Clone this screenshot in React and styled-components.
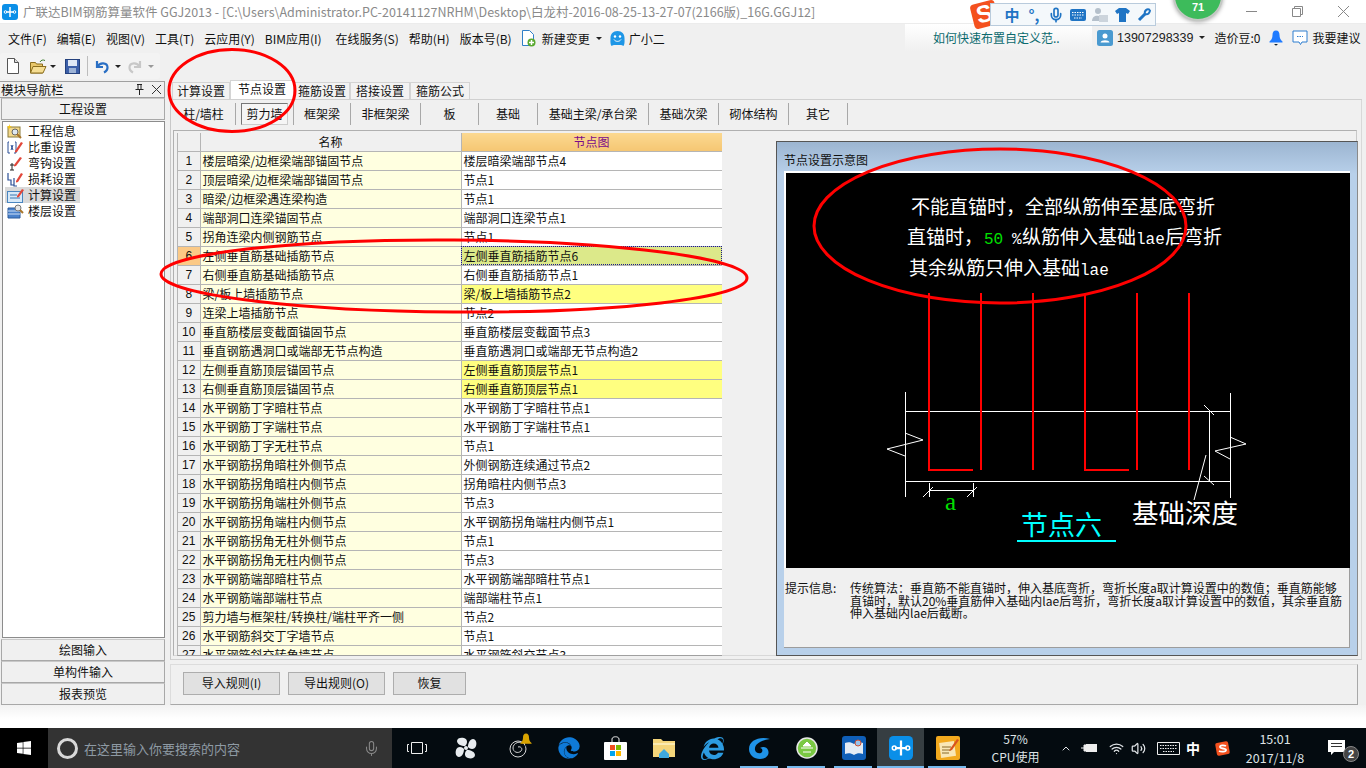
import React from 'react'
import styled, { createGlobalStyle } from 'styled-components'
import { FaWindows, FaEdge, FaInternetExplorer } from 'react-icons/fa'
import { Mic, ChevronUp, Wifi, Volume2 } from 'lucide-react'

const UI = `"Noto Sans CJK SC", "Noto Sans", sans-serif`

const GlobalStyle = createGlobalStyle`
  html, body {
    margin: 0;
    padding: 0;
    width: 1366px;
    height: 768px;
    overflow: hidden;
    background: #f0f0f0;
    font-family: ${UI};
    font-size: 12px;
    color: #111;
  }
  * { box-sizing: border-box; }
`

const Page = styled.div`
  position: relative;
  width: 1366px;
  height: 768px;
  display: flex;
  flex-direction: column;
  overflow: hidden;
`

/* title bar */
const TitleBar = styled.div`
  height: 23px;
  background: #fff;
  display: flex;
  align-items: center;
  padding-left: 2px;
  flex: none;
`
const TitleText = styled.div`
  margin-left: 5px;
  font-size: 12.5px;
  line-height: 23px;
  color: #8a8a8a;
  white-space: nowrap;
`
const WindowButtons = styled.div`
  margin-left: auto;
  display: flex;
`
const WindowButton = styled.div`
  width: 46px;
  height: 23px;
  display: flex;
  align-items: center;
  justify-content: center;
`

/* IME bar over the title bar */
const ImeBar = styled.div`
  position: absolute;
  left: 990px;
  top: 3px;
  width: 166px;
  height: 23px;
  background: #f4f8fb;
  border: 1px solid #b9cbdc;
  display: flex;
  align-items: center;
  padding-left: 10px;
`
const ImeItem = styled.div`
  width: 22px;
  height: 21px;
  display: flex;
  align-items: center;
  justify-content: center;
  color: #1f74c4;
  font-size: 15px;
  font-weight: 700;
`
const ImeLogo = styled.div`
  position: absolute;
  left: 972px;
  top: 2px;
  width: 25px;
  height: 25px;
  background: #f4511e;
  border-radius: 4px;
  transform: rotate(-14deg);
  color: #fff;
  font: 700 24px/24px "Liberation Sans", sans-serif;
  text-align: center;
`
const Ball = styled.div`
  position: absolute;
  left: 1173px;
  top: -29px;
  width: 50px;
  height: 50px;
  border-radius: 50%;
  background: #3dbb5b;
  border: 2px solid #c4c8c4;
  box-shadow: 0 1px 4px rgba(0, 0, 0, 0.35);
  color: #fff;
  font: 700 11px/12px "Liberation Sans", sans-serif;
  display: flex;
  align-items: flex-end;
  justify-content: center;
  padding-bottom: 6px;
`

/* menu */
const MenuBar = styled.div`
  height: 30px;
  display: flex;
  align-items: center;
  padding-left: 8px;
  flex: none;
  border-top: 1px solid #ececec;
`
const MenuItem = styled.div`
  margin-left: ${(p) => p.$left || 0}px;
  margin-right: ${(p) => p.$gap ?? 10}px;
  white-space: nowrap;
  line-height: 16px;
  display: flex;
  align-items: center;
`
const Caret = styled.span`
  display: inline-block;
  border-left: 3px solid transparent;
  border-right: 3px solid transparent;
  border-top: 3px solid ${(p) => p.$color || '#222'};
`
const HelpLink = styled.div`
  position: absolute;
  left: 905px;
  top: 24px;
  width: 187px;
  height: 27px;
  background: linear-gradient(#fff, #f0f0f0);
  color: #0b6a6e;
  line-height: 27px;
  padding-left: 28px;
  white-space: nowrap;
`
const AccountArea = styled.div`
  position: absolute;
  left: 1097px;
  top: 24px;
  height: 27px;
  display: flex;
  align-items: center;
  white-space: nowrap;
`
const Phone = styled.span`
  font-family: "Liberation Sans", sans-serif;
  font-size: 12.5px;
  margin-left: 4px;
  color: #222;
`

/* toolbar */
const Toolbar = styled.div`
  height: 28px;
  flex: none;
  display: flex;
  align-items: flex-start;
`
const ToolGroup = styled.div`
  height: 26px;
  width: 160px;
  background: #f3f3f3;
  border-radius: 3px;
  display: flex;
  align-items: center;
  padding-left: 5px;
`
const ToolCell = styled.div`
  width: ${(p) => p.$w}px;
  display: flex;
  justify-content: center;
  align-items: center;
`
const ToolSep = styled.div`
  width: 1px;
  height: 20px;
  background: #bdbdbd;
  margin: 0 6px 0 7px;
`
const UndoGlyph = styled.svg`
  transform: ${(p) => (p.$flip ? 'scaleX(-1)' : 'none')};
`

/* main */
const Main = styled.div`
  height: 624px;
  flex: none;
  display: flex;
`
const Sidebar = styled.div`
  width: 165px;
  flex: none;
  display: flex;
  flex-direction: column;
  margin-right: 5px;
`
const SideHeader = styled.div`
  height: 17px;
  border: 1px solid #a0a0a0;
  border-left: none;
  display: flex;
  align-items: center;
  font-size: 12.5px;
  line-height: 15px;
  padding-left: 1px;
`
const SideHeaderTools = styled.div`
  margin-left: auto;
  display: flex;
  gap: 8px;
  padding-right: 3px;
  align-items: center;
`
const SideButton = styled.div`
  height: 22px;
  border: 1px solid #a8a8a8;
  border-top-color: #c8c8c8;
  background: #f0f0f0;
  margin-left: 1px;
  text-align: center;
  line-height: 20px;
`
const SideList = styled.div`
  flex: 1;
  margin: 1px 0 1px 2px;
  background: #fff;
  border: 1px solid #8c8c8c;
  padding: 1px 2px;
`
const SideItem = styled.div`
  height: 16px;
  display: flex;
  align-items: center;
  width: 75px;
  padding-left: 2px;
  background: ${(p) => (p.$active ? '#d9d9d9' : 'transparent')};
  line-height: 16px;
  white-space: nowrap;
`
const SideIcon = styled.span`
  width: 18px;
  height: 16px;
  margin-right: 3px;
  flex: none;
  display: flex;
  align-items: center;
`
const Content = styled.div`
  width: 1192px;
  flex: none;
  display: flex;
  flex-direction: column;
`
const TabStrip = styled.div`
  height: 19px;
  flex: none;
  display: flex;
  align-items: flex-end;
  padding-left: 2px;
  border-bottom: 1px solid #d0d0d0;
`
const Tab = styled.div`
  width: ${(p) => p.$w}px;
  height: ${(p) => (p.$active ? 19 : 17)}px;
  background: ${(p) => (p.$active ? '#fff' : '#f2f2f2')};
  border: 1px solid #d4d4d4;
  border-bottom: none;
  text-align: center;
  line-height: 16px;
  position: relative;
`
const Sheet = styled.div`
  height: 560px;
  flex: none;
  border-left: 1px solid #c8c8c8;
  border-right: 1px solid #d8d8d8;
  border-bottom: 1px solid #d0d0d0;
  padding: 3px 4px 3px 1px;
  display: flex;
  flex-direction: column;
`
const SubTabs = styled.div`
  height: 22px;
  display: flex;
  flex: none;
  margin-bottom: 5px;
`
const SubTab = styled.div`
  width: ${(p) => p.$w}px;
  flex: none;
  border-right: 1px solid #a8a8a8;
  display: flex;
  align-items: center;
  justify-content: center;
  padding: 0 5px;
  line-height: 16px;
  white-space: nowrap;
`
const SubTabInner = styled.div`
  flex: 1;
  height: 22px;
  text-align: center;
  line-height: 20px;
  border: 1px solid transparent;
  border-color: ${(p) => (p.$active ? '#777 #ccc #ccc #777' : 'transparent')};
  background: ${(p) => (p.$active ? '#f5f5f5' : 'transparent')};
`
const Workspace = styled.div`
  flex: 1;
  border: 1px solid #b0b0b0;
  border-right-color: #c8c8c8;
  border-bottom-color: #d8d8d8;
  padding: 2px 0 3px 3px;
  display: flex;
  min-height: 0;
  margin-left: 1px;
`
const GridWrap = styled.div`
  width: 545px;
  height: 523px;
  flex: none;
  overflow: hidden;
  border-bottom: 1px solid #a0a0a0;
  border-left: 1px solid #b5b5b5;
`
const Grid = styled.table`
  border-collapse: collapse;
  table-layout: fixed;
  width: 544px;
`
const GridCol = styled.col`
  width: ${(p) => p.$w}px;
`
const HeadCell = styled.th`
  height: 18px;
  padding: 0;
  border: 1px solid #b5b5b5;
  border-top: none;
  border-left: ${(p) => (p.$first ? 'none' : '1px solid #b5b5b5')};
  font-weight: 400;
  line-height: 16px;
  background: ${(p) => (p.$accent ? 'linear-gradient(#fbd890, #f5c673)' : '#f0f0f0')};
  color: ${(p) => (p.$accent ? '#7a0a8a' : '#111')};
`
const NumCell = styled.td`
  height: 19px;
  padding: 0;
  border: 1px solid #b5b5b5;
  border-left: none;
  text-align: center;
  line-height: 16px;
  font-family: "Liberation Sans", sans-serif;
  background: ${(p) => (p.$current ? '#fbc986' : '#f0f0f0')};
`
const NameCell = styled.td`
  height: 19px;
  padding: 0 0 0 2px;
  border: 1px solid #b5b5b5;
  background: #ffffe0;
  line-height: 16px;
  white-space: nowrap;
  overflow: hidden;
`
const ValueCell = styled.td`
  height: 19px;
  padding: 0 0 0 2px;
  border: 1px solid #b5b5b5;
  line-height: 16px;
  white-space: nowrap;
  overflow: hidden;
  background: ${(p) => ({ sel: '#dce98a', yellow: '#ffff80' }[p.$tone] || '#fff')};
  outline: ${(p) => (p.$tone === 'sel' ? '1px dotted #1a1a8c' : 'none')};
  outline-offset: -1px;
`
const DiagramPanel = styled.div`
  width: 582px;
  height: 515px;
  flex: none;
  margin: 8px 0 0 54px;
  border: 1px solid #555;
  border-right-color: #8a8a8a;
  background: linear-gradient(#9cb5d1 0, #b8d0ea 32px, #b8d0ea 100%);
  padding: 0 7px 7px 7px;
  display: flex;
  flex-direction: column;
`
const DiagramTitle = styled.div`
  height: 29px;
  flex: none;
  line-height: 35px;
`
const DiagramCanvas = styled.div`
  height: 397px;
  flex: none;
  background: #000;
  border: 2px solid #fff;
  border-bottom: none;
  border-right: none;
  overflow: hidden;
`
const InfoBox = styled.div`
  flex: 1;
  background: #f0f0f0;
  border-right: 1px solid #9c9c9c;
  border-bottom: 1px solid #9c9c9c;
  display: flex;
  padding: 14px 0 0 1px;
  line-height: 12.5px;
`
const InfoLabel = styled.div`
  width: 65px;
  flex: none;
`
const InfoText = styled.div`
  width: 492px;
`
const ButtonBar = styled.div`
  flex: 1;
  margin: 4px 4px 0 0;
  border-bottom: 1px solid #a8a8a8;
  border-top: 1px solid #dcdcdc;
  border-left: 1px solid #dcdcdc;
  border-right: 1px solid #a8a8a8;
  padding: 7px 0 0 12px;
  display: flex;
  gap: 8px;
`
const RuleButton = styled.div`
  width: ${(p) => p.$w}px;
  height: 23px;
  background: #e1e1e1;
  border: 1px solid #adadad;
  text-align: center;
  line-height: 20px;
`

const FooterGap = styled.div`
  height: 23px;
  flex: none;
  background: linear-gradient(#f2f2f2, #fff 60%);
`

/* taskbar */
const Taskbar = styled.div`
  height: 40px;
  flex: none;
  background: #040b10;
  display: flex;
  align-items: center;
  color: #dfe3e6;
`
const StartCell = styled.div`
  width: 48px;
  height: 40px;
  background: #000;
  display: flex;
  align-items: center;
  justify-content: center;
  flex: none;
`
const SearchBox = styled.div`
  width: 344px;
  height: 40px;
  background: #333;
  display: flex;
  align-items: center;
  padding-left: 9px;
  flex: none;
  color: #8e9aa4;
  font-size: 13px;
`
const Cortana = styled.div`
  width: 21px;
  height: 21px;
  border: 3px solid #d8d8d8;
  border-radius: 50%;
  margin-right: 6px;
`
const SearchMic = styled.div`
  margin-left: auto;
  margin-right: 12px;
  display: flex;
  color: #888;
`
const TaskCell = styled.div`
  position: relative;
  width: ${(p) => p.$w || 47}px;
  height: 40px;
  flex: none;
  display: flex;
  align-items: center;
  justify-content: center;
  background: ${(p) => (p.$active ? '#363e42' : 'transparent')};

  &::after {
    content: '';
    display: ${(p) => (p.$running ? 'block' : 'none')};
    position: absolute;
    left: ${(p) => (p.$active ? 0 : 4)}px;
    right: ${(p) => (p.$active ? 0 : 5)}px;
    bottom: 0;
    height: 2px;
    background: #76b9ed;
  }
`
const BellBadge = styled.div`
  position: absolute;
  left: 30px;
  top: 5px;
`
const TrayText = styled.div`
  text-align: center;
  font-size: 12px;
  line-height: 18px;
  white-space: nowrap;
`
const ClockText = styled(TrayText)`
  font-size: 12.5px;
  line-height: 19px;
`
const NoticeBadge = styled.div`
  position: absolute;
  left: 37px;
  top: 18px;
  width: 16px;
  height: 16px;
  border-radius: 50%;
  background: #444;
  border: 1px solid #888;
  color: #fff;
  font: 700 11px/14px "Liberation Sans", sans-serif;
  text-align: center;
`
const TrayIme = styled.div`
  color: #fff;
  font-size: 14px;
  font-weight: 700;
`

const Overlay = styled.svg`
  position: absolute;
  left: 0;
  top: 0;
  pointer-events: none;
`

const menus = [
  ['文件(F)'],
  ['编辑(E)'],
  ['视图(V)'],
  ['工具(T)'],
  ['云应用(Y)'],
  ['BIM应用(I)', 14],
  ['在线服务(S)'],
  ['帮助(H)'],
  ['版本号(B)', 9],
]

const tabs = [
  ['计算设置', 58],
  ['节点设置', 64, true],
  ['箍筋设置', 56],
  ['搭接设置', 60],
  ['箍筋公式', 60],
]

const subTabs = [
  ['柱/墙柱', 64],
  ['剪力墙', 58, true],
  ['框架梁', 57],
  ['非框架梁', 70],
  ['板', 58],
  ['基础', 59],
  ['基础主梁/承台梁', 111],
  ['基础次梁', 70],
  ['砌体结构', 70],
  ['其它', 59],
]

const rows = [
  ['楼层暗梁/边框梁端部锚固节点', '楼层暗梁端部节点4'],
  ['顶层暗梁/边框梁端部锚固节点', '节点1'],
  ['暗梁/边框梁遇连梁构造', '节点1'],
  ['端部洞口连梁锚固节点', '端部洞口连梁节点1'],
  ['拐角连梁内侧钢筋节点', '节点1'],
  ['左侧垂直筋基础插筋节点', '左侧垂直筋插筋节点6', 'sel'],
  ['右侧垂直筋基础插筋节点', '右侧垂直筋插筋节点1'],
  ['梁/板上墙插筋节点', '梁/板上墙插筋节点2', 'yellow'],
  ['连梁上墙插筋节点', '节点2'],
  ['垂直筋楼层变截面锚固节点', '垂直筋楼层变截面节点3'],
  ['垂直钢筋遇洞口或端部无节点构造', '垂直筋遇洞口或端部无节点构造2'],
  ['左侧垂直筋顶层锚固节点', '左侧垂直筋顶层节点1', 'yellow'],
  ['右侧垂直筋顶层锚固节点', '右侧垂直筋顶层节点1', 'yellow'],
  ['水平钢筋丁字暗柱节点', '水平钢筋丁字暗柱节点1'],
  ['水平钢筋丁字端柱节点', '水平钢筋丁字端柱节点1'],
  ['水平钢筋丁字无柱节点', '节点1'],
  ['水平钢筋拐角暗柱外侧节点', '外侧钢筋连续通过节点2'],
  ['水平钢筋拐角暗柱内侧节点', '拐角暗柱内侧节点3'],
  ['水平钢筋拐角端柱外侧节点', '节点3'],
  ['水平钢筋拐角端柱内侧节点', '水平钢筋拐角端柱内侧节点1'],
  ['水平钢筋拐角无柱外侧节点', '节点1'],
  ['水平钢筋拐角无柱内侧节点', '节点3'],
  ['水平钢筋端部暗柱节点', '水平钢筋端部暗柱节点1'],
  ['水平钢筋端部端柱节点', '端部端柱节点1'],
  ['剪力墙与框架柱/转换柱/端柱平齐一侧', '节点2'],
  ['水平钢筋斜交丁字墙节点', '节点1'],
  ['水平钢筋斜交转角墙节点', '水平钢筋斜交节点3'],
]

/* the cross logo, also used in the taskbar */
const AppLogo = ({ size = 16 }) => (
  <svg width={size} height={size} viewBox="0 0 16 16">
    <rect width="16" height="16" rx="3" fill="#0a8fe8" />
    <path d="M8 3v10M4 8h8" fill="none" stroke="#fff" strokeWidth="1.5" />
    <circle cx="3.5" cy="8" r="1.3" fill="none" stroke="#fff" />
    <circle cx="12.5" cy="8" r="1.3" fill="none" stroke="#fff" />
  </svg>
)

const DocIcon = () => (
  <svg width="14" height="16" viewBox="0 0 14 16">
    <path d="M1.5.5h7l4 4v11h-11z" fill="#fff" stroke="#555" />
    <path d="M8.5.5v4h4" fill="#ddd" stroke="#555" />
  </svg>
)
const OpenIcon = () => (
  <svg width="17" height="15" viewBox="0 0 17 15">
    <path d="M.5 3.5h5l1 1.5h6v9H.5z" fill="#e8c66a" stroke="#8a6d1d" />
    <path d="M3 7.5h13l-3 6.500H.5z" fill="#f5dd92" stroke="#8a6d1d" />
    <path d="M10 3c1-2 3-2.500 5-1.500" fill="none" stroke="#3a7a2a" />
  </svg>
)
const SaveIcon = () => (
  <svg width="15" height="15" viewBox="0 0 15 15">
    <rect x=".5" y=".5" width="14" height="14" fill="#3c5fa8" stroke="#24417d" />
    <rect x="3" y="1" width="9" height="6" fill="#dfe8f5" />
    <rect x="4" y="9" width="7" height="5" fill="#9db3d6" />
  </svg>
)
const UndoIcon = ({ muted }) => (
  <UndoGlyph width="15" height="15" viewBox="0 0 15 15" $flip={muted}>
    <path d="M2 2v6h6M2.5 7.5C5 3 12 3.500 12.500 8c.2 2.500-1.500 4.500-3.500 5.500" fill="none" stroke={muted ? '#c8c8c8' : '#2a6fc4'} strokeWidth="2.2" />
  </UndoGlyph>
)
const NewChangeIcon = () => (
  <svg width="15" height="17" viewBox="0 0 15 17">
    <path d="M1.5.5h7l4 4v11h-11z" fill="#fff" stroke="#2f7fc8" />
    <circle cx="10.5" cy="12.5" r="4" fill="#58a82e" />
    <path d="M10.5 10v5M8 12.5h5" stroke="#fff" strokeWidth="1.5" />
  </svg>
)
const RobotIcon = () => (
  <svg width="17" height="17" viewBox="0 0 17 17">
    <path d="M8.5 1c4.500 0 7 3 7 7 0 2 .5 6-1 8-1.500-1-2-1-3-1H5.500c-1 0-1.500 0-3 1-1.500-2-1-6-1-8 0-4 2.500-7 7-7z" fill="#1e96e6" />
    <circle cx="6" cy="6.5" r="1.2" fill="#fff" />
    <circle cx="11" cy="6.5" r="1.2" fill="#fff" />
    <path d="M5 9.5c1.500 2.500 5.500 2.500 7 0" fill="none" stroke="#fff" />
  </svg>
)
const UserTile = () => (
  <svg width="16" height="16" viewBox="0 0 16 16">
    <rect width="16" height="16" rx="2.5" fill="#4a9ad0" />
    <circle cx="8" cy="6" r="2.5" fill="#fff" />
    <path d="M3.5 12.5c.5-3 8.500-3 9 0z" fill="#fff" />
  </svg>
)
const BellIcon = ({ color = '#1f7bff', size = 14 }) => (
  <svg width={size} height={size + 2} viewBox="0 0 14 16">
    <path d="M7 .5c2.500 0 3.500 2 3.500 4.500 0 3 1 5 3 6.500v1H.5v-1c2-1.500 3-3.500 3-6.500C3.500 2.500 4.500.5 7 .5z" fill={color} />
    <path d="M5 14h4l-2 1.800z" fill="#123" />
  </svg>
)
const ChatIcon = () => (
  <svg width="16" height="16" viewBox="0 0 16 16">
    <path d="M1 1h14v11H10l-1.500 2.500L7 12H1z" fill="#fff" stroke="#2f7fd0" />
    <path d="M5 6.5h6" stroke="#2f7fd0" strokeDasharray="1.5 1" />
  </svg>
)

const sideIcons = [
  <svg key="a" width="17" height="15" viewBox="0 0 17 15">
    <rect x="1" y="3" width="12" height="10" fill="#f4d98c" stroke="#8a7a3a" />
    <circle cx="8" cy="8" r="3" fill="#dfe8f0" stroke="#666" />
    <path d="M10 10l4 4" stroke="#a8752a" strokeWidth="2" />
    <path d="M2 0l1 2 2 .5-2 1-1 2-1-2-1-1 2-.5z" fill="#f5c518" />
  </svg>,
  <svg key="b" width="17" height="15" viewBox="0 0 17 15">
    <path d="M2 2H1v11h2M8 2h1v11H7M4 5l2 5M6 5l-2 5" fill="none" stroke="#2a4f96" />
    <path d="M8 11l6-9 2 1-6 9-2 .5z" fill="#e2473a" />
  </svg>,
  <svg key="c" width="17" height="15" viewBox="0 0 17 15">
    <path d="M5 7v7M3 9h4M3 14h4" fill="none" stroke="#222" />
    <path d="M7 9l6-8 2 1-6 8-2 .5z" fill="#e2473a" />
  </svg>,
  <svg key="d" width="17" height="15" viewBox="0 0 17 15">
    <path d="M1 1v7h3v5h3" fill="none" stroke="#2a4f96" strokeWidth="1.2" />
    <path d="M7 6v8h3" fill="none" stroke="#2a4f96" strokeWidth="1.2" />
    <path d="M9 9l5-8 2 1-5 8-2 .5z" fill="#e2473a" />
  </svg>,
  <svg key="e" width="18" height="15" viewBox="0 0 18 15">
    <rect x=".5" y="3.5" width="15" height="11" fill="#d7e9f8" stroke="#4a86c0" />
    <path d="M3 7h7M3 10h10" stroke="#3a76b0" />
    <path d="M10 8l5-7 2 1-5 7-2 .5z" fill="#e2473a" />
  </svg>,
  <svg key="f" width="18" height="15" viewBox="0 0 18 15">
    <path d="M1 4h12v10H1z" fill="#4a82cc" stroke="#2a5a9c" />
    <path d="M1 7h12M1 10h12" stroke="#cfe0f5" />
    <circle cx="11" cy="4" r="3" fill="#e5e5e5" stroke="#777" />
    <path d="M13 6l3 3" stroke="#a8752a" strokeWidth="2" />
  </svg>,
]

const TaskIcons = {
  fan: (
    <svg width="24" height="24" viewBox="0 0 24 24" fill="#e8ecef">
      <circle cx="12" cy="12" r="2" />
      <path d="M11 10C7 10 3 8 3 5s4-4 7-3 4 4 2 7zM14 11c0-4 2-8 5-8s4 4 3 7-4 4-7 2zM13 14c4 0 8 2 8 5s-4 4-7 3-4-4-2-7zM10 13c0 4-2 8-5 8s-4-4-3-7 4-4 7-2z" />
    </svg>
  ),
  swirl: (
    <svg width="20" height="20" viewBox="0 0 20 20" fill="none" stroke="#d6d6d6">
      <circle cx="10" cy="11" r="8" />
      <path d="M17 6C12 2 5 5 5 10c0 4 5 6 8 3 2-2 0-5-3-4" />
    </svg>
  ),
  store: (
    <svg width="23" height="24" viewBox="0 0 23 24">
      <path d="M8 6V3c0-3 7-3 7 0v3" fill="none" stroke="#eee" />
      <rect y="6" width="23" height="18" rx="1" fill="#fff" />
      <rect x="6" y="9" width="5" height="5" fill="#f25022" />
      <rect x="12" y="9" width="5" height="5" fill="#7fba00" />
      <rect x="6" y="15" width="5" height="5" fill="#00a4ef" />
      <rect x="12" y="15" width="5" height="5" fill="#ffb900" />
    </svg>
  ),
  folder: (
    <svg width="22" height="20" viewBox="0 0 22 20">
      <path d="M0 1h8l2 2h12v16H0z" fill="#f4d57a" />
      <path d="M0 5h22v2H0z" fill="#fbeab0" />
      <path d="M6 16l5-5 5 5v4H6z" fill="#3fa9e0" />
    </svg>
  ),
  glodon: (
    <svg width="24" height="24" viewBox="0 0 24 24">
      <path d="M22 3C12 0 1 4 1 13c0 6 5 10 11 10s10-4 8-9c-1-3-5-4-8-2 2 0 3 2 2 4-1 2-6 2-7-2C6 8 14 4 22 3z" fill="#1f93e8" />
    </svg>
  ),
  green: (
    <svg width="22" height="22" viewBox="0 0 22 22">
      <circle cx="11" cy="11" r="10" fill="#7ac943" stroke="#e8e8e8" strokeWidth="1.5" />
      <path d="M5 11h12M7 15h8M11 5l-4 4h8z" fill="#fff" stroke="#fff" />
    </svg>
  ),
  book: (
    <svg width="24" height="24" viewBox="0 0 24 24">
      <rect width="24" height="24" rx="3" fill="#0f5fb8" />
      <path d="M3 7c3-1 6-1 9 1 3-2 6-2 9-1v11c-3-1-6-1-9 1-3-2-6-2-9-1z" fill="#e4ecf5" />
      <circle cx="16" cy="7" r="3" fill="#9cc3ea" stroke="#d05030" />
    </svg>
  ),
  note: (
    <svg width="24" height="24" viewBox="0 0 24 24">
      <rect width="24" height="24" rx="2" fill="#f2a91e" />
      <rect x="4" y="6" width="15" height="15" fill="#f9e7b6" transform="rotate(-8 11 13)" />
      <path d="M6 11h9M6 14h9M6 17h7" stroke="#8a6a2a" />
      <path d="M14 13l7-10 2 1-7 10-3 1z" fill="#d9541e" />
    </svg>
  ),
}

const DiagramText = styled.text`
  font-family: ${UI};
  font-size: ${(p) => p.$size}px;
  fill: ${(p) => p.$fill || '#fff'};
`
const MonoSpan = styled.tspan`
  font-family: "Liberation Mono", monospace;
  font-size: 16px;
`

const Diagram = () => (
  <svg width="564" height="395" viewBox="786 173 564 395">
    <DiagramText x="911" y="214" $size={19}>不能直锚时，全部纵筋伸至基底弯折</DiagramText>
    <DiagramText x="907" y="244" $size={19}>
      直锚时，<MonoSpan x="984" fill="#00e000">50</MonoSpan>
      <MonoSpan x="1012">%</MonoSpan>
      <tspan x="1022">纵筋伸入基础</tspan>
      <MonoSpan x="1136">lae</MonoSpan>
      <tspan x="1165">后弯折</tspan>
    </DiagramText>
    <DiagramText x="909" y="275" $size={19}>
      其余纵筋只伸入基础<MonoSpan x="1080">lae</MonoSpan>
    </DiagramText>

    <g fill="none" stroke="#fff" strokeWidth="1">
      <path d="M905.5 392v105M1230.5 393v105M905 411.5h326M905 481.5h326" />
      <path d="M905 433l18 7-36 9 18 7M1230 437l16 7-31 7 15 8" />
      <path d="M1209.5 411v70M1204 405l10 10M1204 476l10 9M1206 455l-12 45" />
      <path d="M929.5 483v14M973.5 483v14M929 490.5h44M923 497l10-10M967 497l10-10" />
    </g>
    <g fill="none" stroke="#f00" strokeWidth="2">
      <path d="M929 293v177h44M981 293v177M1033 293v177M1085 293v177h44M1137 293v177M1189 293v177" />
    </g>
    <text x="945" y="510" fill="#00e000" fontFamily="Liberation Serif, serif" fontSize="25">a</text>
    <DiagramText x="1021" y="535" $size={27} $fill="#00ffff">节点六</DiagramText>
    <path d="M1017 541h99" stroke="#00ffff" strokeWidth="2" />
    <DiagramText x="1132" y="523" $size={26.5}>基础深度</DiagramText>
  </svg>
)

const App = () => (
  <Page>
    <GlobalStyle />

    <TitleBar>
      <AppLogo />
      <TitleText>广联达BIM钢筋算量软件 GGJ2013 - [C:\Users\Administrator.PC-20141127NRHM\Desktop\白龙村-2016-08-25-13-27-07(2166版)_16G.GGJ12]</TitleText>
      <WindowButtons>
        <WindowButton>
          <svg width="11" height="11" viewBox="0 0 11 11"><path d="M0 5.5h11" stroke="#888" /></svg>
        </WindowButton>
        <WindowButton>
          <svg width="11" height="11" viewBox="0 0 11 11" fill="none" stroke="#888"><path d="M.5 2.5h8v8h-8zM2.500 2.500v-2h8v8h-2" /></svg>
        </WindowButton>
        <WindowButton>
          <svg width="11" height="11" viewBox="0 0 11 11"><path d="M0 0l11 11M11 0L0 11" stroke="#888" /></svg>
        </WindowButton>
      </WindowButtons>
    </TitleBar>

    <MenuBar>
      {menus.map(([m, gap]) => (
        <MenuItem key={m} $gap={gap}>{m}</MenuItem>
      ))}
      <MenuItem $gap={6}><NewChangeIcon /></MenuItem>
      <MenuItem $gap={6}>新建变更</MenuItem>
      <MenuItem $gap={7}><Caret /></MenuItem>
      <MenuItem $gap={3}><RobotIcon /></MenuItem>
      <MenuItem>广小二</MenuItem>
    </MenuBar>

    <HelpLink>如何快速布置自定义范..</HelpLink>
    <AccountArea>
      <UserTile />
      <Phone>13907298339</Phone>
      <MenuItem $left={6} $gap={9}><Caret /></MenuItem>
      <MenuItem $gap={9}>造价豆:0</MenuItem>
      <MenuItem $gap={9}><BellIcon /></MenuItem>
      <MenuItem $gap={4}><ChatIcon /></MenuItem>
      <span>我要建议</span>
    </AccountArea>

    <Toolbar>
      <ToolGroup>
        <ToolCell $w={16}><DocIcon /></ToolCell>
        <ToolCell $w={10} />
        <ToolCell $w={18}><OpenIcon /></ToolCell>
        <ToolCell $w={12}><Caret /></ToolCell>
        <ToolCell $w={6} />
        <ToolCell $w={16}><SaveIcon /></ToolCell>
        <ToolSep />
        <ToolCell $w={16}><UndoIcon /></ToolCell>
        <ToolCell $w={18}><Caret /></ToolCell>
        <ToolCell $w={16}><UndoIcon muted /></ToolCell>
        <ToolCell $w={18}><Caret $color="#999" /></ToolCell>
      </ToolGroup>
    </Toolbar>

    <Main>
      <Sidebar>
        <SideHeader>
          模块导航栏
          <SideHeaderTools>
            <svg width="9" height="11" viewBox="0 0 9 11"><path d="M2 .5h5M3 .5v5M6 .5v5M.5 5.500h8M4.500 5.500V11" fill="none" stroke="#222" /></svg>
            <svg width="9" height="9" viewBox="0 0 9 9"><path d="M0 0l9 9M9 0L0 9" stroke="#333" /></svg>
          </SideHeaderTools>
        </SideHeader>
        <SideButton>工程设置</SideButton>
        <SideList>
          {['工程信息', '比重设置', '弯钩设置', '损耗设置', '计算设置', '楼层设置'].map((name, i) => (
            <SideItem key={name} $active={i === 4}>
              <SideIcon>{sideIcons[i]}</SideIcon>
              {name}
            </SideItem>
          ))}
        </SideList>
        <SideButton>绘图输入</SideButton>
        <SideButton>单构件输入</SideButton>
        <SideButton>报表预览</SideButton>
      </Sidebar>

      <Content>
        <TabStrip>
          {tabs.map(([label, w, active]) => (
            <Tab key={label} $w={w} $active={active}>{label}</Tab>
          ))}
        </TabStrip>
        <Sheet>
          <SubTabs>
            {subTabs.map(([label, w, active]) => (
              <SubTab key={label} $w={w}>
                <SubTabInner $active={active}>{label}</SubTabInner>
              </SubTab>
            ))}
          </SubTabs>
          <Workspace>
            <GridWrap>
              <Grid>
                <colgroup>
                  <GridCol $w={22} />
                  <GridCol $w={261} />
                  <GridCol $w={261} />
                </colgroup>
                <thead>
                  <tr>
                    <HeadCell $first />
                    <HeadCell>名称</HeadCell>
                    <HeadCell $accent>节点图</HeadCell>
                  </tr>
                </thead>
                <tbody>
                  {rows.map(([name, value, tone], i) => (
                    <tr key={name}>
                      <NumCell $current={tone === 'sel'}>{i + 1}</NumCell>
                      <NameCell>{name}</NameCell>
                      <ValueCell $tone={tone}>{value}</ValueCell>
                    </tr>
                  ))}
                </tbody>
              </Grid>
            </GridWrap>
            <DiagramPanel>
              <DiagramTitle>节点设置示意图</DiagramTitle>
              <DiagramCanvas><Diagram /></DiagramCanvas>
              <InfoBox>
                <InfoLabel>提示信息:</InfoLabel>
                <InfoText>
                  传统算法：垂直筋不能直锚时，伸入基底弯折，弯折长度a取计算设置中的数值；垂直筋能够直锚时，默认20%垂直筋伸入基础内lae后弯折，弯折长度a取计算设置中的数值，其余垂直筋伸入基础内lae后截断。
                </InfoText>
              </InfoBox>
            </DiagramPanel>
          </Workspace>
        </Sheet>
        <ButtonBar>
          <RuleButton $w={97}>导入规则(I)</RuleButton>
          <RuleButton $w={97}>导出规则(O)</RuleButton>
          <RuleButton $w={73}>恢复</RuleButton>
        </ButtonBar>
      </Content>
    </Main>

    <FooterGap />

    <Taskbar>
      <StartCell><FaWindows size={16} color="#fff" /></StartCell>
      <SearchBox>
        <Cortana />
        在这里输入你要搜索的内容
        <SearchMic><Mic size={17} strokeWidth={1.5} /></SearchMic>
      </SearchBox>
      <TaskCell $w={50}>
        <svg width="20" height="14" viewBox="0 0 20 14" fill="none" stroke="#eee"><path d="M4.5 1.5h11v11h-11zM2 3.500H.5v7H2M18 3.500h1.500v7H18" /></svg>
      </TaskCell>
      <TaskCell $w={48}>{TaskIcons.fan}</TaskCell>
      <TaskCell $w={55}>
        {TaskIcons.swirl}
        <BellBadge><BellIcon color="#d9a400" size={12} /></BellBadge>
      </TaskCell>
      <TaskCell><FaEdge size={22} color="#0f7ad8" /></TaskCell>
      <TaskCell>{TaskIcons.store}</TaskCell>
      <TaskCell $w={50}>{TaskIcons.folder}</TaskCell>
      <TaskCell><FaInternetExplorer size={23} color="#2c9be0" /></TaskCell>
      <TaskCell $running>{TaskIcons.glodon}</TaskCell>
      <TaskCell $running>{TaskIcons.green}</TaskCell>
      <TaskCell $running>{TaskIcons.book}</TaskCell>
      <TaskCell $running $active><AppLogo size={24} /></TaskCell>
      <TaskCell $running>{TaskIcons.note}</TaskCell>
      <TaskCell $w={89}>
        <TrayText>57%<br />CPU使用</TrayText>
      </TaskCell>
      <TaskCell $w={12}><ChevronUp size={15} /></TaskCell>
      <TaskCell $w={34}>
        <svg width="16" height="10" viewBox="0 0 16 10"><path d="M0 5h3M3 2h2v6H3z" stroke="#eee" fill="#eee" /><rect x="5.5" y="1.5" width="10" height="7" fill="#eee" stroke="#eee" /></svg>
      </TaskCell>
      <TaskCell $w={20}><Wifi size={15} /></TaskCell>
      <TaskCell $w={24}><Volume2 size={15} /></TaskCell>
      <TaskCell $w={36}>
        <svg width="23" height="13" viewBox="0 0 23 13" fill="none" stroke="#eee"><path d="M.5.5h22v12H.5z" /><path d="M3 3.500h17M3 6.500h17M6 9.500h11" strokeDasharray="1.5 1" /></svg>
      </TaskCell>
      <TaskCell $w={14}><TrayIme>中</TrayIme></TaskCell>
      <TaskCell $w={44}>
        <svg width="15" height="15" viewBox="0 0 15 15"><rect x="1" y="1" width="13" height="13" rx="2" fill="#f4511e" transform="rotate(-10 7.5 7.5)" /><path d="M11 5c-2-1-6-1-6 1s6 1 6 3-5 2-7 1" fill="none" stroke="#fff" strokeWidth="1.8" /></svg>
      </TaskCell>
      <TaskCell $w={62}>
        <ClockText>15:01<br />2017/11/8</ClockText>
      </TaskCell>
      <TaskCell $w={60}>
        <svg width="17" height="16" viewBox="0 0 17 16"><path d="M0 0h17v12H6l-3 3v-3H0z" fill="#fff" /><path d="M3 3.500h11M3 6.500h11" stroke="#333" /></svg>
        <NoticeBadge>2</NoticeBadge>
      </TaskCell>
    </Taskbar>

    <ImeLogo>S</ImeLogo>
    <ImeBar>
      <ImeItem>中</ImeItem>
      <ImeItem>°,</ImeItem>
      <ImeItem><Mic size={16} strokeWidth={2.5} /></ImeItem>
      <ImeItem>
        <svg width="16" height="12" viewBox="0 0 16 12"><rect width="16" height="12" rx="2" fill="#1f74c4" /><path d="M2 3.500h12M2 6h12M4 9h8" stroke="#fff" strokeDasharray="1.5 1" /></svg>
      </ImeItem>
      <ImeItem>
        <svg width="16" height="15" viewBox="0 0 16 15" fill="#b5c0cb"><circle cx="6" cy="4" r="3" /><path d="M0 14c0-7 10-7 10 0z" /><rect x="7" y="8" width="9" height="7" fill="#ccd4dc" /></svg>
      </ImeItem>
      <ImeItem>
        <svg width="15" height="14" viewBox="0 0 15 14" fill="#1f74c4"><path d="M4 0h7l4 3-2 3-2-1v9H4V5L2 6 0 3z" /></svg>
      </ImeItem>
      <ImeItem>
        <svg width="15" height="15" viewBox="0 0 15 15" fill="none" stroke="#1f74c4" strokeWidth="3"><path d="M2 13l6-6" /><path d="M8 7c-1-3 2-6 5-4M8 7c3 1 5-1 5-4" strokeWidth="2" /></svg>
      </ImeItem>
    </ImeBar>
    <Ball>71</Ball>

    <Overlay width="1366" height="768" viewBox="0 0 1366 768" fill="none" stroke="#f00" strokeWidth="3">
      <ellipse cx="232" cy="90.5" rx="63" ry="41" />
      <ellipse cx="454" cy="276" rx="293" ry="36" transform="rotate(0.4 454 276)" />
      <ellipse cx="1000" cy="226" rx="186" ry="77" />
    </Overlay>
  </Page>
)

export default App
